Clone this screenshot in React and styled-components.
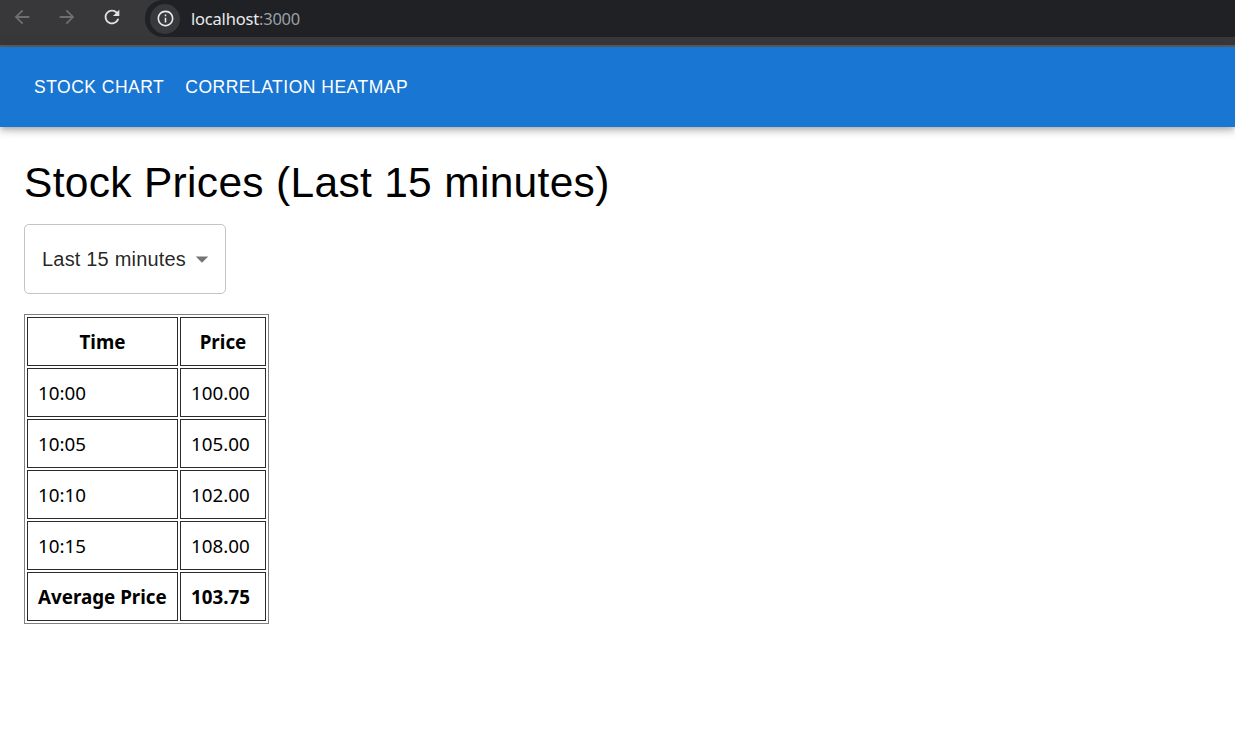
import React, { useState } from 'react';
import styled, { createGlobalStyle } from 'styled-components';

const GlobalStyle = createGlobalStyle`
    html, body {
        margin: 0;
        padding: 0;
        background: #ffffff;
    }
    body {
        font-family: "Liberation Sans", Arial, sans-serif;
    }
`;

const prices = [
    { time: '10:00', price: 100 },
    { time: '10:05', price: 105 },
    { time: '10:10', price: 102 },
    { time: '10:15', price: 108 }
];

const BackIcon = () => (
    <svg width="22" height="22" viewBox="0 0 24 24" fill="currentColor">
        <path d="M20 11H7.83l5.59-5.59L12 4l-8 8 8 8 1.41-1.41L7.83 13H20v-2z" />
    </svg>
);

const ForwardIcon = () => (
    <svg width="22" height="22" viewBox="0 0 24 24" fill="currentColor">
        <path d="M4 11h12.17l-5.59-5.59L12 4l8 8-8 8-1.41-1.41L16.17 13H4v-2z" />
    </svg>
);

const ReloadIcon = () => (
    <svg width="22" height="22" viewBox="0 0 24 24" fill="currentColor">
        <path d="M17.65 6.35C16.2 4.9 14.21 4 12 4c-4.42 0-7.99 3.58-7.99 8s3.57 8 7.99 8c3.73 0 6.84-2.55 7.73-6h-2.08c-.82 2.33-3.04 4-5.65 4-3.31 0-6-2.69-6-6s2.69-6 6-6c1.66 0 3.14.69 4.22 1.78L13 11h7V4l-2.35 2.35z" />
    </svg>
);

const InfoIcon = () => (
    <svg width="19" height="19" viewBox="0 0 24 24" fill="currentColor">
        <path d="M11 7h2v2h-2zm0 4h2v6h-2zm1-9C6.48 2 2 6.48 2 12s4.48 10 10 10 10-4.48 10-10S17.52 2 12 2zm0 18c-4.41 0-8-3.59-8-8s3.59-8 8-8 8 3.59 8 8-3.59 8-8 8z" />
    </svg>
);

const ArrowDropDown = () => (
    <svg width="30" height="30" viewBox="0 0 24 24" fill="currentColor">
        <path d="M7 10l5 5 5-5z" />
    </svg>
);

const App = () => {
    const [range] = useState('Last 15 minutes');
    const average = prices.reduce((sum, p) => sum + p.price, 0) / prices.length;

    return (
        <>
            <GlobalStyle />
            <StBrowser>
                <StNavButton $disabled>
                    <BackIcon />
                </StNavButton>
                <StNavButton $disabled>
                    <ForwardIcon />
                </StNavButton>
                <StNavButton>
                    <ReloadIcon />
                </StNavButton>
                <StOmnibox>
                    <StSiteInfo>
                        <InfoIcon />
                    </StSiteInfo>
                    <StUrl>
                        localhost<StPort>:3000</StPort>
                    </StUrl>
                </StOmnibox>
            </StBrowser>

            <StAppBar>
                <StMenuButton>Stock Chart</StMenuButton>
                <StMenuButton>Correlation Heatmap</StMenuButton>
            </StAppBar>

            <StMain>
                <StTitle>Stock Prices ({range})</StTitle>
                <StSelect>
                    <StSelectValue>{range}</StSelectValue>
                    <StSelectIcon>
                        <ArrowDropDown />
                    </StSelectIcon>
                </StSelect>

                <StTable>
                    <thead>
                        <tr>
                            <StTh $width={129}>Time</StTh>
                            <StTh $width={64}>Price</StTh>
                        </tr>
                    </thead>
                    <tbody>
                        {prices.map((p) => (
                            <tr key={p.time}>
                                <StTd>{p.time}</StTd>
                                <StTd>{p.price.toFixed(2)}</StTd>
                            </tr>
                        ))}
                        <tr>
                            <StTd $bold>Average Price</StTd>
                            <StTd $bold>{average.toFixed(2)}</StTd>
                        </tr>
                    </tbody>
                </StTable>
            </StMain>
        </>
    );
};

export default App;

const StBrowser = styled.div`
    display: flex;
    align-items: flex-start;
    height: 45px;
    background-color: #38383a;
    border-bottom: 2px solid #5c5c5e;
    gap: 1px;
`;

const StNavButton = styled.div`
    width: 44px;
    height: 34px;
    display: flex;
    align-items: center;
    justify-content: center;
    color: ${(props) => (props.$disabled ? '#6e6f72' : '#e3e3e3')};
`;

const StOmnibox = styled.div`
    flex: 1;
    height: 37px;
    margin-left: 10px;
    display: flex;
    align-items: center;
    background-color: #202124;
    border-radius: 18px 0 0 18px;
`;

const StSiteInfo = styled.div`
    width: 30px;
    height: 30px;
    margin-left: 5px;
    border-radius: 50%;
    background-color: #38393c;
    color: #e8eaed;
    display: flex;
    align-items: center;
    justify-content: center;
`;

const StUrl = styled.div`
    margin-left: 11px;
    font-family: "Noto Sans", sans-serif;
    font-size: 16.5px;
    color: #e8eaed;
    letter-spacing: -0.2px;
`;

const StPort = styled.span`
    color: #9aa0a6;
`;

const StAppBar = styled.header`
    display: flex;
    align-items: center;
    gap: 1px;
    height: 80px;
    padding-left: 24px;
    background-color: #1976d2;
    box-shadow: 0px 2.5px 5px -1.25px rgba(0, 0, 0, 0.2), 0px 5px 6.25px 0px rgba(0, 0, 0, 0.14),
        0px 1.25px 12.5px 0px rgba(0, 0, 0, 0.12);
    position: relative;
`;

const StMenuButton = styled.button`
    border: 0;
    background: transparent;
    padding: 7px 10px;
    color: #ffffff;
    font-family: "Liberation Sans", Arial, sans-serif;
    font-size: 17.5px;
    font-weight: 400;
    line-height: 1.75;
    letter-spacing: 0.5px;
    text-transform: uppercase;
    cursor: pointer;
`;

const StMain = styled.main`
    padding: 30px 24px 0;
    display: flex;
    flex-direction: column;
    align-items: flex-start;
`;

const StTitle = styled.h4`
    margin: 0 0 14.5px;
    font-family: "Liberation Sans", Arial, sans-serif;
    font-size: 42.5px;
    font-weight: 400;
    line-height: 52.5px;
    letter-spacing: 0.31px;
    color: #000000;
`;

const StSelect = styled.div`
    box-sizing: border-box;
    width: 202px;
    height: 70px;
    padding-left: 17px;
    border: 1px solid rgba(0, 0, 0, 0.23);
    border-radius: 5px;
    display: flex;
    align-items: center;
    position: relative;
`;

const StSelectValue = styled.span`
    font-family: "Liberation Sans", Arial, sans-serif;
    font-size: 20px;
    letter-spacing: 0.19px;
    color: rgba(0, 0, 0, 0.87);
`;

const StSelectIcon = styled.span`
    position: absolute;
    right: 8px;
    top: 19px;
    width: 30px;
    height: 30px;
    color: rgba(0, 0, 0, 0.54);
`;

const StTable = styled.table`
    margin-top: 20px;
    border-collapse: separate;
    border-spacing: 2px;
    border: 1px solid #808080;
    font-family: "Noto Sans", "Segoe UI", sans-serif;
    font-size: 18.8px;
    color: #000000;
`;

const StTh = styled.th`
    width: ${(props) => props.$width}px;
    padding: 11px 10px 9px;
    border: 1px solid #2b2b2b;
    line-height: 27px;
    font-weight: 700;
    text-align: center;
    white-space: nowrap;
`;

const StTd = styled.td`
    padding: 11px 10px 9px;
    border: 1px solid #2b2b2b;
    line-height: 27px;
    font-weight: ${(props) => (props.$bold ? 700 : 400)};
    text-align: left;
    white-space: nowrap;
`;
